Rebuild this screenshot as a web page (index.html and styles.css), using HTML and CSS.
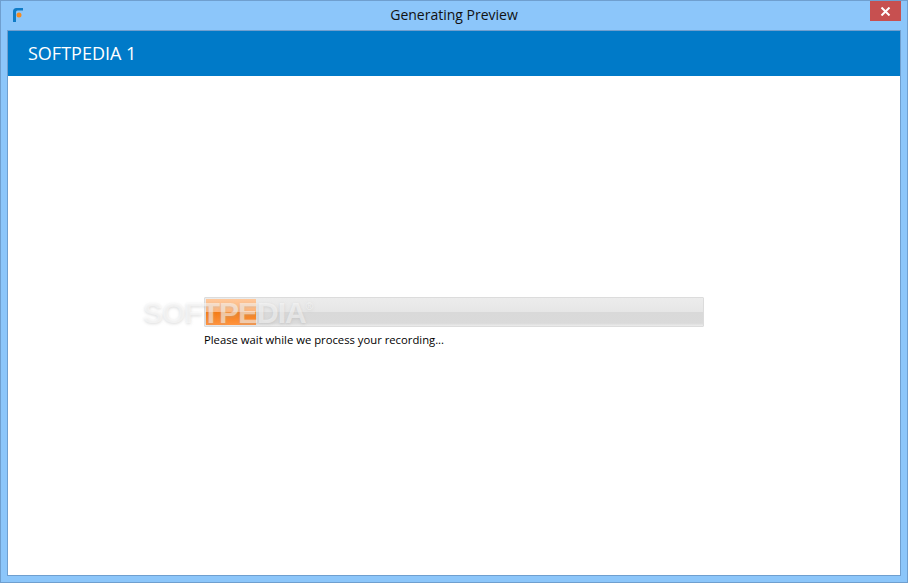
FILE: index.html
```html
<!DOCTYPE html>
<html lang="en">
<head>
<meta charset="utf-8">
<title>Generating Preview</title>
<link rel="stylesheet" href="styles.css">
</head>
<body>
<div class="window">
  <div class="titlebar">
    <svg class="app-icon" width="12" height="15" viewBox="0 0 12 15" aria-hidden="true">
      <path d="M1 14V3.500Q1 0 4.500 0H11V2.500H5.500Q4 2.500 4 4V14Z" fill="#0f7cc7"/>
      <circle cx="7" cy="7" r="2.500" fill="#f58a1f"/>
    </svg>
    <div class="title">Generating Preview</div>
    <div class="close">
      <svg width="11" height="9" viewBox="0 0 11 9" aria-hidden="true">
        <path d="M1.500 0.500L9.500 8.500M9.500 0.500L1.500 8.500" stroke="#fff" stroke-width="2" fill="none"/>
      </svg>
    </div>
  </div>
  <div class="client">
    <div class="header">SOFTPEDIA 1</div>
    <div class="content">
      <div class="progress-block">
        <div class="progress">
          <div class="progress-fill"></div>
        </div>
        <div class="status">Please wait while we process your recording...</div>
        <div class="watermark">SOFTPEDIA<sup class="reg">®</sup></div>
      </div>
    </div>
  </div>
</div>
</body>
</html>
```
FILE: styles.css
```css
* { box-sizing: border-box; }
html, body { margin: 0; padding: 0; }
body {
  width: 908px;
  height: 583px;
  overflow: hidden;
  font-family: "Open Sans", "Noto Sans", sans-serif;
}
.window {
  width: 908px;
  height: 583px;
  display: flex;
  flex-direction: column;
  background: #8cc6fa;
  border: 1px solid #6f9fcf;
  padding: 0 6px 6px;
}
.titlebar {
  height: 29px;
  flex: none;
  position: relative;
  display: flex;
  align-items: center;
  justify-content: center;
}
.app-icon {
  position: absolute;
  left: 5px;
  top: 7px;
}
.title {
  font-size: 14px;
  line-height: 19px;
  color: #111;
  margin-top: -2px;
}
.close {
  position: absolute;
  top: 0;
  right: 0;
  width: 31px;
  height: 20px;
  background: #c75050;
  display: flex;
  align-items: center;
  justify-content: center;
}
.client {
  flex: 1;
  display: flex;
  flex-direction: column;
  background: #fff;
  border: 1px solid #6f9fcf;
}
.header {
  height: 45px;
  flex: none;
  background: #007ac8;
  color: #fff;
  font-size: 18px;
  line-height: 45px;
  padding-left: 20px;
}
.content {
  flex: 1;
  display: flex;
  justify-content: center;
  padding-top: 221px;
}
.progress-block {
  width: 500px;
  position: relative;
}
.progress {
  height: 30px;
  border: 1px solid #dcdcdc;
  padding: 1px;
  background: linear-gradient(#ececec 0, #e6e6e6 50%, #d9d9d9 50%, #dadada 90%, #ececec 100%);
  border-radius: 1px;
}
.progress-fill {
  width: 50px;
  height: 100%;
  background: linear-gradient(#ffc89a 0, #ffb57a 50%, #f57c14 50%, #ff9440 100%);
}
.status {
  margin-top: 5px;
  font-size: 11.270px;
  line-height: 16px;
  color: #000;
}
.watermark {
  position: absolute;
  left: -61px;
  top: 0;
  font-family: "Liberation Sans", sans-serif;
  font-weight: 700;
  font-size: 30px;
  line-height: 32px;
  letter-spacing: -1px;
  color: rgba(255, 255, 255, 0.5);
  text-shadow: 0 1px 3px rgba(170, 170, 170, 0.4);
  white-space: nowrap;
}
.reg {
  font-size: 10px;
  font-weight: 400;
  letter-spacing: 0;
  vertical-align: 13px;
  line-height: 0;
}
```
